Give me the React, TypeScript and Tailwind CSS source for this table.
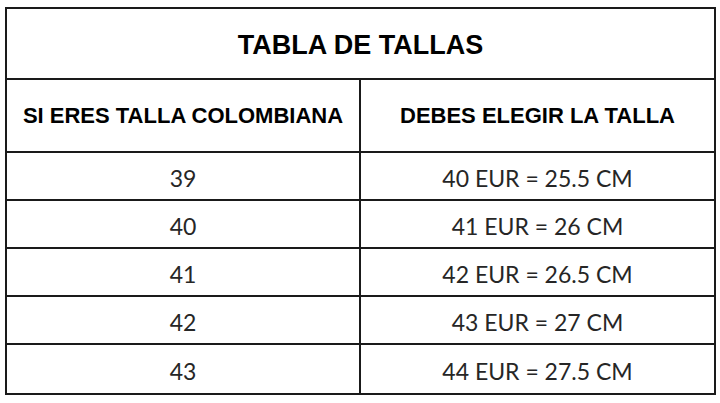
export default function App() {
  const rows = [
    ['39', '40 EUR = 25.5 CM'],
    ['40', '41 EUR = 26 CM'],
    ['41', '42 EUR = 26.5 CM'],
    ['42', '43 EUR = 27 CM'],
    ['43', '44 EUR = 27.5 CM'],
  ]

  return (
    <div className="w-[720px] h-[403px] bg-white pt-[7px] pl-[5px]">
      <div className="w-[711px] border-2 border-[#1a1a1a] text-black">
        <div className="h-[71px] flex items-center justify-center pt-[3px] border-b-2 border-[#1a1a1a] font-['Liberation_Sans',Arial,sans-serif] font-bold text-[27px]">
          TABLA DE TALLAS
        </div>
        <div className="grid grid-cols-[354px_1fr] h-[73px] border-b-2 border-[#1a1a1a] font-['Liberation_Sans',Arial,sans-serif] font-bold text-[22px]">
          <div className="flex items-center justify-center border-r-2 border-[#1a1a1a]">SI ERES TALLA COLOMBIANA</div>
          <div className="flex items-center justify-center">DEBES ELEGIR LA TALLA</div>
        </div>
        {rows.map(([col, eur], i) => (
          <div
            key={col}
            className={`grid grid-cols-[354px_1fr] h-[48px] font-['Lato','Noto_Sans',sans-serif] text-[23px] text-[#262626] ${i < rows.length - 1 ? 'border-b-2 border-[#1a1a1a]' : ''}`}
          >
            <div className="flex items-center justify-center pt-[4px] border-r-2 border-[#1a1a1a]">{col}</div>
            <div className="flex items-center justify-center pt-[4px]">{eur}</div>
          </div>
        ))}
      </div>
    </div>
  )
}
